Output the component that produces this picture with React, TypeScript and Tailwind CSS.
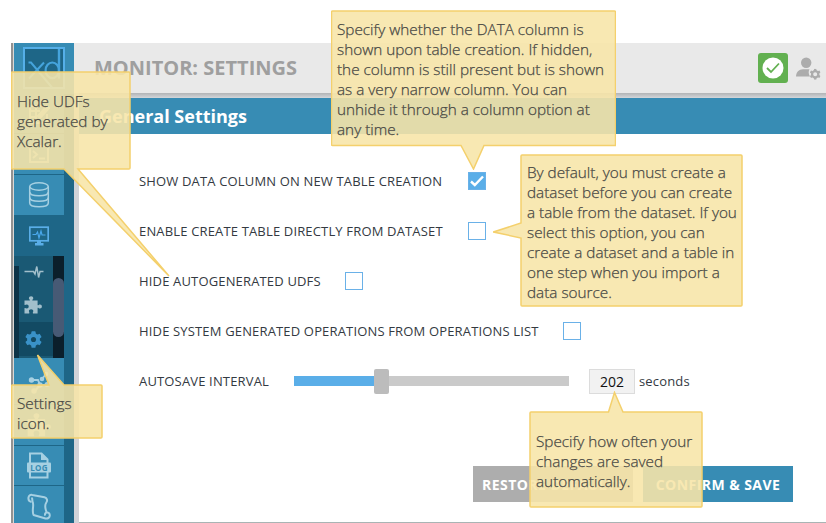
import React from "react";

const ink = "#a6d0e2";

function LogoIcon() {
  return (
    <svg width="42" height="42" viewBox="0 0 42 42" fill="none" className="block">
      <rect x="1" y="1" width="40" height="40" fill="#1e6687" stroke="#55afe8" strokeWidth="2" />
      <path d="M5.500 15.500H8L29 40.500M21 15.500L6 31.500" stroke="#45a4dc" strokeWidth="2" />
      <path d="M36 2V31.500" stroke="#45a4dc" strokeWidth="2.400" />
      <ellipse cx="29.300" cy="23.300" rx="6.700" ry="7.800" stroke="#45a4dc" strokeWidth="2.200" />
    </svg>
  );
}

function EditIcon() {
  return (
    <svg width="22" height="22" viewBox="0 0 22 22" fill="none" stroke={ink} strokeWidth="2">
      <path d="M19 11V20H2V3H13M2 8H12M2 14H9M8 3V20" />
      <path d="M10 13L19 3L21 5L12 15Z" fill={ink} />
    </svg>
  );
}

function TerminalIcon() {
  return (
    <svg width="20" height="20" viewBox="0 0 20 20" fill="none" stroke={ink} strokeWidth="2">
      <rect x="1" y="2" width="18" height="16" />
      <path d="M4 7L8 10.500L4 14M10 14.500H16" />
    </svg>
  );
}

function DatabaseIcon() {
  return (
    <svg width="22" height="28" viewBox="0 0 22 28" fill="none" stroke={ink} strokeWidth="1.500">
      <ellipse cx="11" cy="5.500" rx="9.300" ry="3.700" />
      <path d="M1.700 5.500V22C1.700 24.500 6 25.800 11 25.800S20.300 24.500 20.300 22V5.500" />
      <path d="M1.700 11C1.700 13.500 6 14.800 11 14.800S20.300 13.500 20.300 11M1.700 16.500C1.700 19 6 20.300 11 20.300S20.300 19 20.300 16.500" />
    </svg>
  );
}

function MonitorIcon() {
  return (
    <svg width="20" height="20" viewBox="0 0 20 20" fill="none">
      <rect x="0.800" y="1.200" width="18.400" height="13.600" stroke="#5aaee8" strokeWidth="1.700" />
      <path d="M3.500 8.500H7L8.500 6L10 12L12 5L13 9H16.500" stroke="#4aa8ec" strokeWidth="1.200" />
      <path d="M8 15H12V17H14.500V19.500H6V17H8Z" fill="#5aaee8" />
    </svg>
  );
}

function PulseIcon() {
  return (
    <svg width="20" height="14" viewBox="0 0 20 14" fill="none" stroke="#a2bfcb" strokeWidth="1.500" className="block">
      <path d="M0.500 6.500H9.500L11 9L12.800 1.500L14.600 12.500L16 6.500H19.500" />
    </svg>
  );
}

function PuzzleIcon({ size, color }: { size: number; color: string }) {
  return (
    <svg width={size} height={size} viewBox="0 0 18 18" fill={color} className="block">
      <path d="M0.500 4.500H5.800C6.400 3.900 4.900 3.400 4.900 2.200C4.900 0.900 5.800 0.200 7.100 0.200S9.300 0.900 9.300 2.200C9.300 3.400 7.800 3.900 8.400 4.500H13.600V9C14.200 9.600 14.700 8.400 16 8.400C17.200 8.400 17.900 9.300 17.900 10.400S17.200 12.400 16 12.400C14.700 12.400 14.200 11.200 13.600 11.800V17.500H9.100C8.300 16.900 9.300 16.400 9.300 15.100C9.300 13.900 8.300 13.200 7.100 13.200S4.900 13.900 4.900 15.100C4.900 16.400 5.900 16.900 5.100 17.500H0.500V12.300C1 11.600 1.800 12.500 2.900 12.500C4 12.500 4.700 11.600 4.700 10.500S4 8.500 2.900 8.500C1.800 8.500 1 9.400 0.500 8.700Z" />
    </svg>
  );
}

function GearIcon({ size, color, hole }: { size: number; color: string; hole: string }) {
  return (
    <svg width={size} height={size} viewBox="0 0 20 20" className="block">
      <g fill={color}>
        <circle cx="10" cy="10" r="7.500" />
        {[0, 60, 120, 180, 240, 300].map((a) => (
          <path key={a} d="M7 5L7.600 1Q7.700 0.300 8.400 0.300H11.600Q12.300 0.300 12.400 1L13 5Z" transform={`rotate(${a} 10 10)`} />
        ))}
      </g>
      <circle cx="10" cy="10" r="3" fill={hole} />
    </svg>
  );
}

function GraphIcon() {
  return (
    <svg width="22" height="28" viewBox="0 0 22 28" className="block">
      <path d="M4 9H10L12 14H19M12 14L6 21M14 8L18 3" fill="none" stroke={ink} strokeWidth="2" />
      <g fill={ink}>
        <circle cx="3.500" cy="9" r="2.700" />
        <circle cx="18" cy="3" r="2.300" />
        <circle cx="14" cy="8" r="2.300" />
        <circle cx="12" cy="14" r="2.700" />
        <circle cx="19" cy="13.500" r="2.500" />
        <circle cx="6" cy="20" r="2.700" />
      </g>
    </svg>
  );
}

function LogIcon() {
  return (
    <svg width="24" height="27" viewBox="0 0 24 27" className="block">
      <path d="M3 25.500V1.500H14.500L20.500 7.500V25.500Z" fill="none" stroke={ink} strokeWidth="2" />
      <path d="M14 1V8H21Z" fill={ink} />
      <rect x="0" y="10.500" width="24" height="10" rx="1" fill={ink} />
      <text x="12" y="18.500" textAnchor="middle" fill="#378cb4" fontSize="8" fontWeight="700" fontFamily="Open Sans" letterSpacing="0.300">LOG</text>
    </svg>
  );
}

function ScrollIcon() {
  return (
    <svg width="24" height="27" viewBox="0 0 24 27" fill="none" stroke={ink} strokeWidth="2" strokeLinejoin="round" className="block">
      <path d="M4.500 9C2 8.500 1.200 6.500 1.500 4.500C1.800 2.500 3.200 1.500 5.300 2L17.500 4.300C20 5 20.800 7.500 19.300 9.500C17.500 12 18 15 19.500 19" />
      <path d="M5 4.500L5.500 8.500C7.500 12 4.500 17 6.500 22L18.500 25.500C21 26 22.800 24.500 22.800 22.300C22.800 20.300 21.200 19 19.500 19.500C18 20 17.500 21.500 18.500 22.500" />
    </svg>
  );
}

function UserGearIcon() {
  return (
    <svg width="25" height="23" viewBox="0 0 25 23" className="block">
      <circle cx="10.200" cy="5.700" r="5.200" fill="#acacac" />
      <path d="M0 19.500C0.300 14.800 2.700 12.500 7 12.200H13.500C12.400 14 12.300 16.800 14 19.500Z" fill="#acacac" />
      <svg x="13.700" y="11.700" width="11" height="11" viewBox="0 0 20 20">
        <circle cx="10" cy="10" r="5.700" fill="none" stroke="#acacac" strokeWidth="4" />
        {[0, 60, 120, 180, 240, 300].map((a) => (
          <path key={a} d="M7.500 4L8 0H12L12.500 4Z" fill="#acacac" transform={`rotate(${a} 10 10)`} />
        ))}
      </svg>
    </svg>
  );
}

function NavItem({ children, className = "" }: { children?: React.ReactNode; className?: string }) {
  return (
    <div className={`flex w-[50px] shrink-0 items-center justify-center border-[#1e6687] bg-[#378cb4] ${className}`}>
      {children}
    </div>
  );
}

function Sidebar() {
  return (
    <aside className="flex w-[60px] shrink-0 flex-col bg-[#1e6687]">
      <div className="flex h-[51px] w-[60px] shrink-0 justify-center bg-[#378cb4] pt-1">
        <LogoIcon />
      </div>
      <NavItem className="h-10 border-b"><EditIcon /></NavItem>
      <NavItem className="h-[41px] border-b"><TerminalIcon /></NavItem>
      <NavItem className="h-10"><DatabaseIcon /></NavItem>
      <div className="flex h-[41px] w-[50px] shrink-0 items-center justify-center"><MonitorIcon /></div>
      <div className="flex h-[102px] w-[50px] shrink-0 bg-[#1a5974]">
        <div className="mt-[10px] w-[5px] bg-[#0c3347]" />
        <div className="flex w-[34px] flex-col">
          <div className="flex h-[32px] items-center pl-[5px]"><PulseIcon /></div>
          <div className="flex h-[34px] items-center pl-[5px]"><PuzzleIcon size={18} color="#a2bfcb" /></div>
          <div className="flex h-[34px] items-center bg-[#124a63] pl-[6px]"><GearIcon size={17} color="#3a92c8" hole="#124a63" /></div>
        </div>
        <div className="w-[11px] bg-[#0b1f2b] pt-[22px]">
          <div className="h-[59px] rounded-full bg-[#475a75]" />
        </div>
      </div>
      <NavItem className="h-[47px] border-b pt-2"><GraphIcon /></NavItem>
      <NavItem className="h-[41px] border-b"><PuzzleIcon size={24} color={ink} /></NavItem>
      <NavItem className="h-10 border-b"><LogIcon /></NavItem>
      <NavItem className="h-10"><ScrollIcon /></NavItem>
    </aside>
  );
}

function Checkbox({ checked = false }: { checked?: boolean }) {
  return (
    <span className={`flex size-[18px] items-center justify-center border border-[#6ab1e8] ${checked ? "bg-[#5aaee8]" : "bg-white"}`}>
      {checked && (
        <svg width="14" height="12" viewBox="0 0 14 12" fill="none" stroke="white" strokeWidth="2.400">
          <path d="M1 6.500L4.800 10L13 1.500" />
        </svg>
      )}
    </span>
  );
}

const options = [
  { label: "SHOW DATA COLUMN ON NEW TABLE CREATION", width: "w-[329px]", checked: true },
  { label: "ENABLE CREATE TABLE DIRECTLY FROM DATASET", width: "w-[329px]", checked: false },
  { label: "HIDE AUTOGENERATED UDFS", width: "w-[206px]", checked: false },
  { label: "HIDE SYSTEM GENERATED OPERATIONS FROM OPERATIONS LIST", width: "w-[424px]", checked: false },
];

type Note = {
  box: string;
  size: [number, number];
  shape: string;
  text: string;
  lines: string[];
};

const notes: Note[] = [
  {
    box: "left-[331px] top-[10px]",
    size: [285, 160],
    shape: "M1.500 1H283.500Q284.500 1 284.500 2V135.500H153L142.500 159L130 135.500H1.500Q0.500 135.500 0.500 134.500V2Q0.500 1 1.500 1Z",
    text: "pl-[6px] pt-[9px]",
    lines: [
      "Specify whether the DATA column is",
      "shown upon table creation. If hidden,",
      "the column is still present but is shown",
      "as a very narrow column. You can",
      "unhide it through a column option at",
      "any time.",
    ],
  },
  {
    box: "left-[493px] top-[154px]",
    size: [250, 153],
    shape: "M29 1H248Q249 1 249 2V151Q249 152 248 152H29Q28 152 28 151V84L0.500 78L28 69V2Q28 1 29 1Z",
    text: "pl-[34px] pt-[8px]",
    lines: [
      "By default, you must create a",
      "dataset before you can create",
      "a table from the dataset. If you",
      "select this option, you can",
      "create a dataset and a table in",
      "one step when you import a",
      "data source.",
    ],
  },
  {
    box: "left-[11px] top-[71px]",
    size: [160, 206],
    shape: "M1 1H118Q119 1 119 2V97Q119 98 118 98H67L158 205L53 98H1Q0.500 98 0.500 97V2Q0.500 1 1 1Z",
    text: "pl-[6px] pt-[20px]",
    lines: ["Hide UDFs", "generated by", "Xcalar."],
  },
  {
    box: "left-[11px] top-[354px]",
    size: [93, 86],
    shape: "M1.500 31H38L26.500 1L53 31H90Q91 31 91 32V83Q91 84 90 84H1.500Q0.500 84 0.500 83V32Q0.500 31 1.500 31Z",
    text: "pl-[6px] pt-[39px]",
    lines: ["Settings", "icon."],
  },
  {
    box: "left-[529px] top-[391px]",
    size: [174, 117],
    shape: "M2 21H79.500L85.500 1.500L94 21H172Q173 21 173 22V115Q173 116 172 116H2Q1 116 1 115V22Q1 21 2 21Z",
    text: "pl-[7px] pt-[40px]",
    lines: ["Specify how often your", "changes are saved", "automatically."],
  },
];

function Callout({ note }: { note: Note }) {
  const [w, h] = note.size;
  return (
    <div className={`absolute ${note.box}`}>
      <svg width={w} height={h} className="absolute left-0 top-0">
        <path d={note.shape} fill="rgba(247,229,169,0.89)" stroke="#f4d06c" strokeWidth="1.500" />
      </svg>
      <div className={`relative text-[15.300px] leading-5 font-light whitespace-nowrap text-[#484844] [-webkit-text-stroke:0.250px_#484844] ${note.text}`}>
        {note.lines.map((line) => (
          <div key={line}>{line}</div>
        ))}
      </div>
    </div>
  );
}

export default function App() {
  return (
    <div className="relative h-[523px] w-[826px] overflow-hidden bg-white pt-[43px] font-['Open_Sans',sans-serif]">
      <div className="flex h-[480px] pl-[11px]">
        <div className="w-[3px] shrink-0 border-l-2 border-[#929292] bg-[#dcd8d4]" />
        <Sidebar />
        <main className="flex min-w-0 flex-1 flex-col">
          <header className="flex h-[50px] shrink-0 items-center bg-[#e9e9e9] pl-[20px] pr-[5px]">
            <h1 className="flex-1 text-[20px] font-bold text-[#9f9f9f]">MONITOR: SETTINGS</h1>
            <div className="mr-2 flex size-[30px] items-center justify-center rounded-[3px] bg-[#62b050]">
              <svg width="22" height="22" viewBox="0 0 22 22" fill="none">
                <circle cx="11" cy="11" r="10.500" fill="white" />
                <path d="M5 11L9 15L17 6.500" stroke="#62b050" strokeWidth="1.800" />
              </svg>
            </div>
            <UserGearIcon />
          </header>
          <div className="flex min-h-0 flex-1">
            <div className="w-[5px] shrink-0 bg-[#d0d3d8]" />
            <section className="flex min-w-0 flex-1 flex-col border-b border-[#a9b4b4]">
              <div className="h-[5px] shrink-0 bg-linear-to-b from-[#b2b4b6] to-[#d3d6da]" />
              <h2 className="flex h-9 shrink-0 items-center bg-[#378cb4] pl-[20px] pt-px text-[18px] font-bold text-white">General Settings</h2>
              <div className="pl-[60px] pt-[22px] text-[13px] font-medium tracking-[0.160px] text-[#343a42]">
                {options.map((o) => (
                  <div key={o.label} className="flex h-[50px] items-center">
                    <span className={`pt-[2px] whitespace-nowrap ${o.width}`}>{o.label}</span>
                    <Checkbox checked={o.checked} />
                  </div>
                ))}
                <div className="flex h-[50px] items-center">
                  <span className="w-[155px] pt-[2px] whitespace-nowrap">AUTOSAVE INTERVAL</span>
                  <div className="flex w-[275px] items-center">
                    <div className="h-[10px] w-[80px] bg-[#5aaee8]" />
                    <div className="h-[25px] w-[15px] rounded-[2px] bg-[#bcbcbc]" />
                    <div className="h-[10px] flex-1 bg-[#cacaca]" />
                  </div>
                  <span className="ml-5 flex h-[25px] w-[46px] items-center justify-center border border-[#dcdcdc] bg-[#f2f2f2] text-[14px] font-normal tracking-normal text-[#111]">202</span>
                  <span className="ml-1 pt-[2px]">seconds</span>
                </div>
              </div>
              <div className="mt-[60px] flex gap-[10px] pl-[394px] text-[14px] font-bold tracking-[0.450px] whitespace-nowrap text-white">
                <button className="h-9 w-[160px] bg-[#adadad]">RESTORE DEFAULTS</button>
                <button className="h-9 w-[150px] bg-[#378cb4]">CONFIRM &amp; SAVE</button>
              </div>
            </section>
          </div>
        </main>
      </div>
      {notes.map((n) => (
        <Callout key={n.box} note={n} />
      ))}
    </div>
  );
}
